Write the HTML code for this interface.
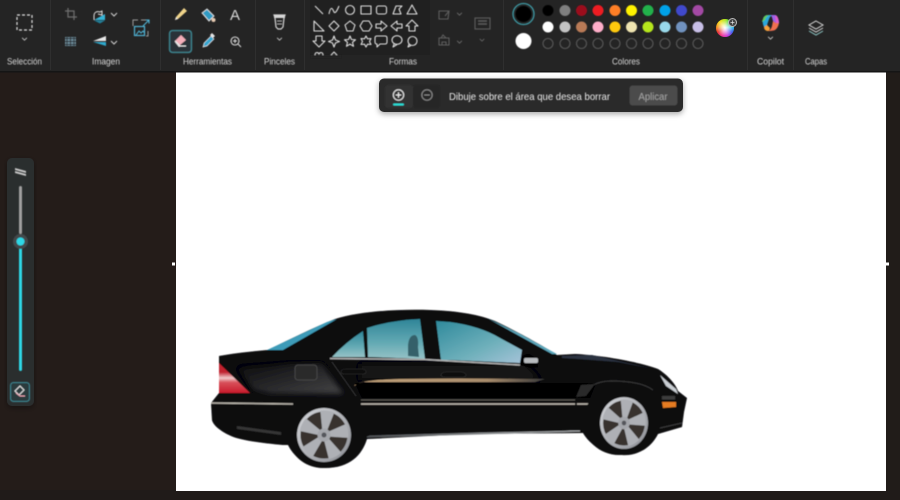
<!DOCTYPE html>
<html lang="es">
<head>
<meta charset="utf-8">
<title>Paint</title>
<style>
html,body{margin:0;padding:0;width:900px;height:500px;overflow:hidden;background:#241c19}
svg{display:block;position:absolute;left:0;top:0}
text{font-family:"Liberation Sans",sans-serif}
.wheel{position:absolute;left:716px;top:19px;width:18px;height:18px;border-radius:50%;background:radial-gradient(circle,#fff 0,rgba(255,255,255,.75) 20%,rgba(255,255,255,0) 65%),conic-gradient(#b5e61d,#35d35a,#2fc8e8,#3f5cf0,#c23be0,#f0359a,#e8352f,#f59a1f,#f5e21f,#b5e61d);filter:blur(.3px)}
.badge{position:absolute;left:728px;top:18px;width:7px;height:7px;border-radius:50%;background:#444;border:1px solid #bbb;color:#eee;font:8px/7px "Liberation Sans",sans-serif;text-align:center}
</style>
</head>
<body>
<svg width="900" height="500" viewBox="0 0 900 500" xmlns="http://www.w3.org/2000/svg">
<defs>
<linearGradient id="win" x1="0" y1="0" x2="0" y2="1"><stop offset="0" stop-color="#2f8598"/><stop offset=".6" stop-color="#64aab4"/><stop offset="1" stop-color="#96c2c6"/></linearGradient>
<linearGradient id="win2" x1="0" y1="0" x2="1" y2="1"><stop offset="0" stop-color="#2f8a9c"/><stop offset=".6" stop-color="#6fb0bb"/><stop offset="1" stop-color="#a5c3d8"/></linearGradient>
<linearGradient id="rim" x1="0" y1="0" x2="1" y2="1"><stop offset="0" stop-color="#d4d6da"/><stop offset="1" stop-color="#8d8f95"/></linearGradient>
<linearGradient id="tail" x1="0" y1="0" x2="0" y2="1"><stop offset="0" stop-color="#c0202e"/><stop offset=".3" stop-color="#c0202e"/><stop offset=".5" stop-color="#efc9c9"/><stop offset=".65" stop-color="#d8505a"/><stop offset="1" stop-color="#c81c2c"/></linearGradient>
<linearGradient id="quarter" x1="0" y1="0" x2="1" y2="1"><stop offset="0" stop-color="#0b0b0d"/><stop offset=".55" stop-color="#2a2a2c"/><stop offset="1" stop-color="#454546"/></linearGradient>
<linearGradient id="tan" x1="0" y1="0" x2="1" y2="0"><stop offset="0" stop-color="#c2a27a"/><stop offset=".7" stop-color="#a88c6c"/><stop offset="1" stop-color="#3a3a3a"/></linearGradient>
<linearGradient id="sill" x1="0" y1="0" x2="1" y2="0"><stop offset="0" stop-color="#4e5154"/><stop offset=".6" stop-color="#8b8e90"/><stop offset="1" stop-color="#a9acae"/></linearGradient>
<filter id="b"><feGaussianBlur stdDeviation=".42"/></filter>
<filter id="b2" x="-20%" y="-30%" width="140%" height="160%"><feGaussianBlur stdDeviation="3"/></filter>
<filter id="sh" x="-10%" y="-30%" width="120%" height="170%"><feDropShadow dx="0" dy="2" stdDeviation="3" flood-color="#000" flood-opacity=".35"/></filter>
<symbol id="chev" viewBox="0 0 8 5" overflow="visible"><path d="M1 1l3 3 3-3" fill="none" stroke="#cfcfcf" stroke-width="1"/></symbol>
<path id="spoke" d="M-2.500-5L-7-23.500Q0-25.500 7-23.500L2.500-5Z" fill="#aeb0b5"/>
<g id="wheel">
<circle r="27" fill="url(#rim)"/>
<circle r="23.500" fill="#37332f"/>
<use href="#spoke" transform="rotate(8)"/><use href="#spoke" transform="rotate(80)"/><use href="#spoke" transform="rotate(152)"/><use href="#spoke" transform="rotate(224)"/><use href="#spoke" transform="rotate(296)"/>
<circle r="6.500" fill="#a4a6ab"/><circle r="2.500" fill="#55575b"/>
</g>
</defs>

<rect width="900" height="500" fill="#241c19"/>
<rect x="886" y="72" width="14" height="428" fill="#211c19"/>
<rect x="0" y="490" width="900" height="10" fill="#201b19"/>
<rect width="900" height="71" fill="#242424"/>
<rect y="71" width="900" height="1.500" fill="#151515"/>
<rect x="310" y="0" width="120" height="55" fill="#202020"/>

<g stroke="#2f2f2f" stroke-width="1">
<path d="M50.500 0v70M160.500 0v70M255.500 0v70M304.500 0v70M503.500 0v70M747.500 0v70M793.500 0v70"/>
</g>

<g filter="url(#b)">
<!-- selection -->
<rect x="17" y="15" width="15" height="15" fill="none" stroke="#e0e0e0" stroke-width="1.200" stroke-dasharray="3 2"/>
<use href="#chev" x="21" y="37" width="7" height="4"/>

<!-- image tools -->
<path d="M65 11h9v9M68 8v9h9" fill="none" stroke="#6f6f6f" stroke-width="1.200"/>
<path d="M94 20l11-6v6z" fill="#35b3d6"/>
<path d="M94 20v-4c0-4 3-5 6-4l2-1v4l-4-1" fill="none" stroke="#e0e0e0" stroke-width="1"/>
<path d="M94 20.500h11l-5 3z" fill="#237e98"/>
<use href="#chev" x="110" y="12" width="8" height="5"/>
<rect x="65" y="37" width="11" height="9" fill="#6d8b99"/>
<path d="M65 38.500h11M65 41.500h11M65 44.500h11M67 36v11M70.500 36v11M74 36v11" stroke="#24282a" stroke-width=".9"/>
<path d="M93 41l13-5v5z" fill="#e7e7e7"/><path d="M93 42l13 4v-4z" fill="#2ea7cb"/>
<use href="#chev" x="110" y="40" width="8" height="5"/>
<path d="M133 26v-6h5M141 20h5" fill="none" stroke="#9a9a9a" stroke-width="1"/>
<path d="M148 31v5h-2" fill="none" stroke="#9a9a9a" stroke-width="1"/>
<rect x="134.500" y="26.500" width="10" height="9" fill="none" stroke="#4fb3d4" stroke-width="1.200"/>
<path d="M136 35l3-4 2 2 2-2 1.500 2" fill="none" stroke="#4fb3d4" stroke-width="1"/>
<path d="M143 26l6-6M145.500 20h3.500v3.500" fill="none" stroke="#4fb3d4" stroke-width="1.100"/>

<!-- tools -->
<path d="M176 17l8-9 3 3-9 8-3 1z" fill="#f0d48a"/><path d="M176 17l2 2-3 1z" fill="#e8e8e8"/>
<path d="M202 13l5-4 7 7-5 5z" fill="#2f9bc4" stroke="#e0e0e0" stroke-width="1"/><circle cx="213.500" cy="20" r="2" fill="#e5c9b0"/>
<text x="230" y="20" font-size="15" fill="#d8d8d8">A</text>
<rect x="169.500" y="30.500" width="22" height="22" rx="3" fill="#2c3337" stroke="#3c8793" stroke-width="1.300"/>
<path d="M175 41l6-6 5 5-6 5z" fill="#f3aeb9"/><path d="M175 41l5 5h6" fill="none" stroke="#e8e8e8" stroke-width="1.100"/><path d="M179 47l-4-5 1-1 5 5z" fill="#e8e8e8"/>
<path d="M203 47l1-4 7-7 3 3-7 7z" fill="#35a6cf" stroke="#e6e6e6" stroke-width=".7"/><path d="M210 35l2-2 3 3-2 2z" fill="#e6e6e6"/>
<circle cx="235" cy="41" r="4" fill="none" stroke="#dcdcdc" stroke-width="1.100"/><path d="M238 44l3 3M233 41h4M235 39v4" stroke="#dcdcdc" stroke-width="1"/>

<!-- brushes -->
<path d="M274 15h11l-1 3-1 9-2 2h-3l-2-2-1-9z" fill="none" stroke="#d6d6d6" stroke-width="1.200"/>
<path d="M274 15h11v3h-11z" fill="#d6d6d6"/><path d="M277 21h5M277 24h5" stroke="#bbb" stroke-width="1"/>
<use href="#chev" x="276" y="37" width="7" height="4"/>

<!-- shapes -->
<g fill="none" stroke="#dedede" stroke-width="1.100" stroke-linejoin="round">
<path d="M315 6l8 8"/>
<path d="M329 14c2-10 4-4 5-2s3-1 5-6"/>
<circle cx="350" cy="10" r="4.500"/>
<rect x="361" y="6" width="10" height="8"/>
<rect x="376.500" y="6" width="10" height="8" rx="2"/>
<path d="M393 14l3-8h6l-3 3 2 5z"/>
<path d="M412 5l5 9h-10z"/>
<path d="M314 31V21l10 10z"/>
<path d="M334 21l5 5-5 5-5-5z"/>
<path d="M350 21l5 4-2 6h-6l-2-6z"/>
<path d="M363 21h6l3 5-3 5h-6l-3-5z"/>
<path d="M376 24h5v-3l6 5-6 5v-3h-5z"/>
<path d="M402 24h-5v-3l-6 5 6 5v-3h5z"/>
<path d="M409 31v-5h-3l6-6 6 6h-3v5z"/>
<path d="M316 36v5h-3l6 6 6-6h-3v-5z"/>
<path d="M334 36l1.500 4 4 1.500-4 1.500-1.500 4-1.500-4-4-1.500 4-1.500z"/>
<path d="M350 36l1.500 3.500 4 .3-3 2.500 1 4-3.500-2.200-3.500 2.200 1-4-3-2.500 4-.3z"/>
<path d="M366 36l1.500 2.800 3.500-.3-1.500 3 1.500 3-3.500-.3-1.500 2.800-1.500-2.800-3.500.3 1.500-3-1.500-3 3.500.3z"/>
<path d="M377 36h8q2 0 2 2v4q0 2-2 2h-5l-3 3v-3q-2 0-2-2v-4q0-2 2-2z"/>
<ellipse cx="397" cy="40" rx="5" ry="4.300"/><path d="M394 44l-1 3 4-2.500"/>
<circle cx="412.500" cy="41" r="4.500"/><path d="M409 44l-1 3 3-1.500"/>
<path d="M315 55c0-3 3-3 4-1 1-2 4-2 4 1M331 55l3-3 3 3"/>
</g>
<rect x="311" y="55" width="30" height="3" fill="#242424"/>

<!-- outline / fill -->
<g fill="none" stroke="#5d5d5d" stroke-width="1.100">
<path d="M439 11h10l-1 8h-9zM445 16l4-5"/><path d="M439 45v-7h10v7zM441 38l2-3 3 3M442 45v-3h4v3"/>
<rect x="475" y="18" width="15" height="11"/><path d="M478 21h9M478 24h9" stroke-width="1.500"/>
</g>
<g><use href="#chev" x="456" y="12" width="7" height="4" opacity=".45"/><use href="#chev" x="456" y="40" width="7" height="4" opacity=".45"/><use href="#chev" x="479" y="38" width="6" height="4" opacity=".45"/></g>

<!-- colours -->
<circle cx="523.500" cy="14" r="10.500" fill="none" stroke="#3c9aa5" stroke-width="1.300"/>
<circle cx="523.500" cy="14" r="8" fill="#000"/>
<circle cx="523.500" cy="41" r="8" fill="#fff"/>
<circle cx="548" cy="10.500" r="5.500" fill="#000"/><circle cx="565" cy="10.500" r="5.500" fill="#7f7f7f"/><circle cx="581.500" cy="10.500" r="5.500" fill="#9b0a1e"/><circle cx="598" cy="10.500" r="5.500" fill="#ed1c24"/><circle cx="615" cy="10.500" r="5.500" fill="#ff7f27"/><circle cx="631.500" cy="10.500" r="5.500" fill="#fff200"/><circle cx="648" cy="10.500" r="5.500" fill="#22b14c"/><circle cx="665" cy="10.500" r="5.500" fill="#00a2e8"/><circle cx="681.500" cy="10.500" r="5.500" fill="#3f48cc"/><circle cx="698" cy="10.500" r="5.500" fill="#a349a4"/>
<circle cx="548" cy="27" r="5.500" fill="#fff"/><circle cx="565" cy="27" r="5.500" fill="#c3c3c3"/><circle cx="581.500" cy="27" r="5.500" fill="#b97a57"/><circle cx="598" cy="27" r="5.500" fill="#ffaec9"/><circle cx="615" cy="27" r="5.500" fill="#ffc90e"/><circle cx="631.500" cy="27" r="5.500" fill="#efe4b0"/><circle cx="648" cy="27" r="5.500" fill="#b5e61d"/><circle cx="665" cy="27" r="5.500" fill="#99d9ea"/><circle cx="681.500" cy="27" r="5.500" fill="#7092be"/><circle cx="698" cy="27" r="5.500" fill="#c8bfe7"/>
<g fill="none" stroke="#585858" stroke-width="1.100">
<circle cx="548" cy="43.500" r="5"/><circle cx="565" cy="43.500" r="5"/><circle cx="581.500" cy="43.500" r="5"/><circle cx="598" cy="43.500" r="5"/><circle cx="615" cy="43.500" r="5"/><circle cx="631.500" cy="43.500" r="5"/><circle cx="648" cy="43.500" r="5"/><circle cx="665" cy="43.500" r="5"/><circle cx="681.500" cy="43.500" r="5"/><circle cx="698" cy="43.500" r="5"/>
</g>

<!-- copilot -->
<path d="M763 19q1-4 5-4h5q-3 1-4 4l-2 6-3 2q-2-4-1-8z" fill="#2ba7dc"/>
<path d="M763 19q1-4 5-4h1q-3 2-4 5l-3 2q0-1 1-3z" fill="#63c95a"/>
<path d="M764 27l3-2 3 3-1 3h-2q-3-1-3-4z" fill="#f5a23a"/>
<path d="M771 15h4q2 0 3 3 1 2 1 5h-3l-3-2q-1-4-2-6z" fill="#9a62e8"/>
<path d="M773 21l3 2h3q-1 5-4 7-2 1-7 1 3-1 4-5z" fill="#f0704f"/>
<path d="M775 15q2 1 3 3l1 5h-3z" fill="#e05bc8"/>
<use href="#chev" x="767" y="36" width="7" height="4"/>

<!-- layers -->
<g fill="none" stroke="#d8d8d8" stroke-width="1">
<path d="M816 21l7 4-7 4-7-4z"/><path d="M809 28l7 4 7-4"/><path d="M809 31l7 4 7-4" stroke="#90c9c7"/>
</g>

<!-- labels -->
<g font-size="9" fill="#d6d6d6">
<text x="7" y="64.500" textLength="35" lengthAdjust="spacingAndGlyphs">Selección</text>
<text x="92" y="64.500" textLength="28" lengthAdjust="spacingAndGlyphs">Imagen</text>
<text x="183" y="64.500" textLength="49" lengthAdjust="spacingAndGlyphs">Herramientas</text>
<text x="264" y="64.500" textLength="31" lengthAdjust="spacingAndGlyphs">Pinceles</text>
<text x="389" y="64.500" textLength="28" lengthAdjust="spacingAndGlyphs">Formas</text>
<text x="612" y="64.500" textLength="28" lengthAdjust="spacingAndGlyphs">Colores</text>
<text x="757" y="64.500" textLength="27" lengthAdjust="spacingAndGlyphs">Copilot</text>
<text x="805" y="64.500" textLength="22" lengthAdjust="spacingAndGlyphs">Capas</text>
</g>
</g>

<!-- canvas -->
<rect x="176" y="72.500" width="710" height="418.500" fill="#fff"/>
<rect x="172" y="262.500" width="3" height="3" fill="#fff"/>
<rect x="886" y="262.500" width="3" height="3" fill="#fff"/>

<!-- car -->
<g filter="url(#b)">
<path d="M219 356C235 353 255 351 268 350C290 339 315 327 335 319C360 311 400 309 430 310C460 311 480 315 495 321C520 333 545 347 557 355L575 354C600 355 640 362 658 369C668 375 676 385 678 391L687 398L684 412L682 427L658 434C650 450 635 456 622 455C605 455 590 445 583 433L470 434L367 439C362 455 350 468 325 468C305 468 293 455 288 445L283 445C260 443 240 440 231 436C220 431 213 425 212 420L211 403L219 393Z" fill="#07070a"/>
<path d="M238 368L290 364 322 364 344 394 310 394 270 394 254 390z" fill="url(#quarter)" filter="url(#b2)"/>
<path d="M360 364H525L540 380H360z" fill="#141416" filter="url(#b2)"/>
<path d="M267 350L327 322 337 319 283 350z" fill="#3e9bb8"/>
<path d="M332 357Q346 342 363 331L365 357z" fill="url(#win)"/>
<path d="M367 328Q392 320 420 319L425 359 368 357z" fill="url(#win)"/>
<path d="M436 321L450 322Q480 326 500 338L522 350 520 363 450 360 441 360z" fill="url(#win2)"/>
<path d="M487 318L520 334 557 354 552 354 505 328z" fill="#5da7bc"/>
<path d="M408 345q1-10 7-10 4 2 3 12l1 10-11-1z" fill="#34606a"/>
<path d="M330 358.500L425 359.500 520 365" fill="none" stroke="#b4b4b4" stroke-width="1.400"/>
<rect x="295" y="365" width="22" height="15" rx="3" fill="#2a2a2b" stroke="#4d4d4e" stroke-width=".8"/>
<path d="M341 372q0-3 5-3h17q3 1 3 3t-3 2h-18q-4 0-4-2z" fill="#0c0c0c" stroke="#333" stroke-width=".6"/>
<path d="M441 375q1-3 5-3h16q4 1 4 3t-3 2h-18q-4 0-4-2z" fill="#0c0c0c" stroke="#333" stroke-width=".6"/>
<path d="M219 363L250 393 219 393z" fill="url(#tail)"/>
<path d="M354 386Q358 380 400 379T545 379L535 382H362z" fill="url(#tan)"/>
<path d="M355 383H540L596 383 590 398H362z" fill="#000"/>
<path d="M211 403L293 404" stroke="#b5b1a8" stroke-width="1.500"/>
<path d="M361 404H575M577 404h49" fill="none" stroke="#c0bbb0" stroke-width="1.600"/>
<path d="M361 400H575" stroke="#5e5a55" stroke-width="1"/>
<path d="M237 426l44 6v3l-44-6z" fill="#343435"/>
<path d="M373 426.500H520" stroke="url(#tan)" stroke-width="2.500"/>
<path d="M367 437L480 434 580 431 480 433 370 436z" fill="url(#sill)" stroke="url(#sill)" stroke-width="1"/>
<path d="M332 362L356 396" fill="none" stroke="#3c3c3d" stroke-width=".7"/>
<!-- mirror -->
<path d="M521 361q1-7 8-7l8 5 1 8-8 1-9-3z" fill="#050505"/><rect x="524" y="358" width="14" height="5" rx="1.500" fill="#b8bcbf"/>
<!-- hood -->
<path d="M562 356l30-1 62 14-36-7-40-3-16-1z" fill="#2b3340"/>
<path d="M660 375l16 14 2 5-12-8z" fill="#c9ced3"/>
<path d="M586 390q10-9 25-9 30 0 42 9" fill="none" stroke="#3a3a3b" stroke-width="1"/>
<path d="M586 396l9-12-14 1-5 12z" fill="#2a2a2a"/>
<path d="M662 402l14 0 0 5-13 1z" fill="#e57c21"/>
<rect x="662" y="396" width="13" height="3.500" fill="#3c3c3d"/>
<path d="M660 428l22-5" stroke="#3e3e3f" stroke-width="1"/>
<!-- wheels -->
<ellipse cx="323" cy="435" rx="35" ry="33" fill="#0d0d0e"/>
<use href="#wheel" transform="translate(324 435)"/>
<ellipse cx="619" cy="421" rx="36" ry="34" fill="#09090a"/>
<use href="#wheel" transform="translate(624 423) scale(.89 .96)"/>
</g>

<!-- top floating bar -->
<g filter="url(#sh)"><rect x="379" y="78.500" width="304" height="33.500" rx="5" fill="#2b2b2b"/></g>
<g filter="url(#b)">
<rect x="385" y="85" width="28" height="23" rx="3" fill="#333"/>
<rect x="413" y="85" width="27" height="23" rx="3" fill="#252525"/>
<circle cx="398.500" cy="95" r="5.200" fill="none" stroke="#ececec" stroke-width="1"/><path d="M395.700 95h5.600M398.500 92.200v5.600" stroke="#ececec" stroke-width="1"/>
<rect x="393" y="103.500" width="11" height="2" rx="1" fill="#2cdcd4"/>
<circle cx="427" cy="95" r="5.200" fill="none" stroke="#8c8c8c" stroke-width="1"/><path d="M424.200 95h5.600" stroke="#8c8c8c" stroke-width="1"/>
<text x="449" y="100" font-size="10.500" fill="#ececec" textLength="161" lengthAdjust="spacingAndGlyphs">Dibuje sobre el área que desea borrar</text>
<rect x="629.500" y="85.500" width="48" height="20" rx="3" fill="#4b4b4b"/>
<text x="638.500" y="100" font-size="10" fill="#a0a0a0" textLength="29" lengthAdjust="spacingAndGlyphs">Aplicar</text>
</g>

<!-- left slider -->
<g filter="url(#sh)"><rect x="7" y="158" width="27" height="248" rx="5" fill="#2c2d2e"/></g>
<g filter="url(#b)">
<path d="M15 168l11 3v2l-11-3zM15 171l11 3v2l-11-3z" fill="#c7c7c7"/>
<rect x="19" y="186" width="3" height="48" rx="1.500" fill="#a0a0a0"/>
<rect x="19" y="248" width="3" height="123" rx="1.500" fill="#2fd8e6"/>
<circle cx="20.500" cy="241.500" r="7.500" fill="#43484b"/>
<circle cx="20.500" cy="241.500" r="4" fill="#2fd8e6"/>
<rect x="10.500" y="382.500" width="19" height="19" rx="3" fill="#2a3a3e" stroke="#3c8793" stroke-width="1"/>
<path d="M15 391l5-5 4 4-5 5z" fill="none" stroke="#e6e6e6" stroke-width="1"/>
<path d="M16 393l4 3h5" fill="none" stroke="#f0a9b6" stroke-width="1"/>
</g>
</svg>
<div class="wheel"></div>
<div class="badge">+</div>
</body>
</html>
